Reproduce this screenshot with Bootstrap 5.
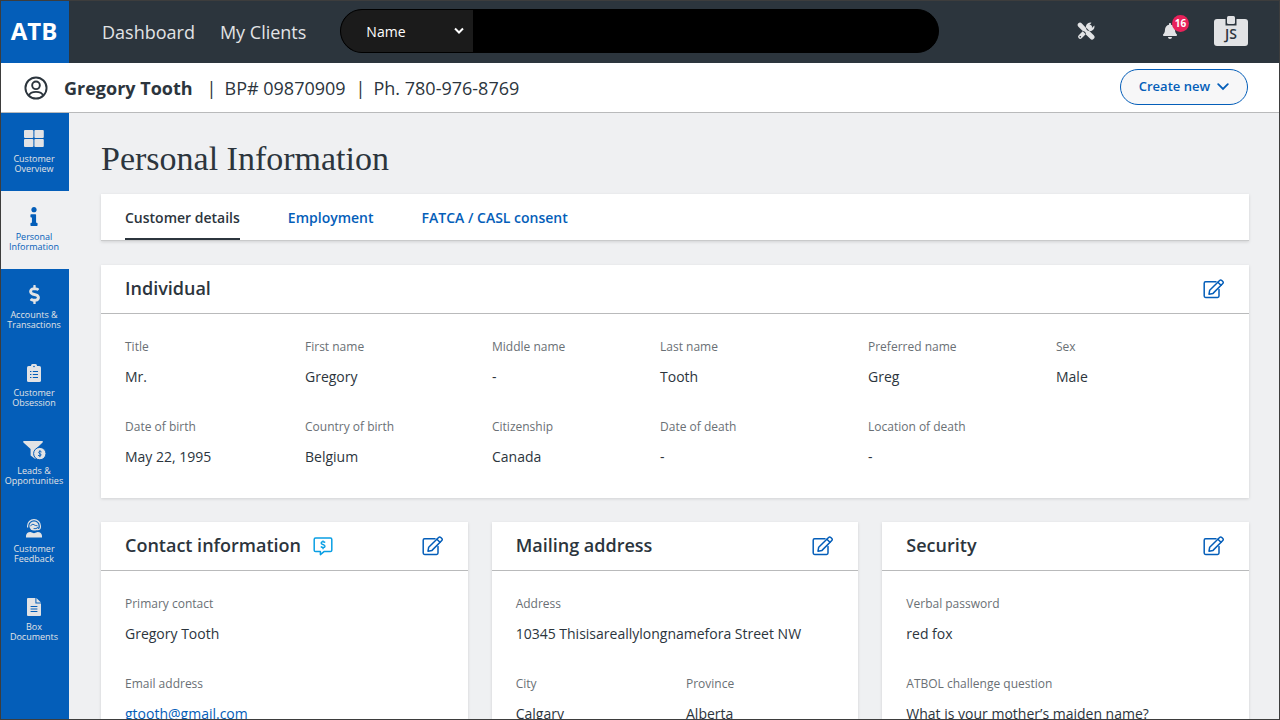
<!DOCTYPE html>
<html lang="en">
<head>
<meta charset="utf-8">
<meta name="viewport" content="width=device-width, initial-scale=1">
<title>Personal Information</title>
<link rel="stylesheet" href="https://cdn.jsdelivr.net/npm/bootstrap@5.3.0/dist/css/bootstrap.min.css">
<style>
  :root { --blue: #045eb9; --ink: #2c353d; --mist: #e2e3e5; --line: #b9babb; }
  body { font-family: "Open Sans", "Liberation Sans", sans-serif; font-size: 14px; line-height: 24px; color: var(--ink); background: #eff0f2; }
  a { color: var(--blue); }
  svg { display: block; flex: none; }
  .app-frame { height: 100vh; border: 1px solid #3d3d3d; overflow: hidden; }

  .topbar { background: var(--ink); min-height: 62px; padding-right: 31px; }
  .brand { background: var(--blue); width: 68px; padding: 0 2px 3px 0; color: #fff; font-weight: 700; font-size: 24px; }
  .brand:hover { color: #fff; }
  .topbar .nav-link { color: var(--mist); font-size: 18px; padding: 0; }
  .main-links { gap: 25px; margin-left: 33px; }
  .search { flex: 0 1 599px; height: 44px; margin: 0 0 2px 34px; border: 1px solid #000; border-radius: 22px; overflow: hidden; background: #000; }
  .search-kind { width: 132px; flex: none; }
  .search-kind .form-select { height: 100%; background: #1b1b1b; color: #fff; border: 0; border-radius: 0; font-size: 14px; padding: 0 24px 0 25px; box-shadow: none; }
  .search-kind svg { position: absolute; right: 8px; top: 50%; margin-top: -4px; pointer-events: none; }
  .search .form-control { background: #000; color: #fff; border: 0; border-radius: 0; box-shadow: none; }
  .tools { padding-bottom: 3px; }
  .icon-btn { background: none; border: 0; padding: 0; color: var(--mist); }
  .btn-bell { margin: 0 37px 0 68px; }
  .count { position: absolute; left: 9px; top: -8px; width: 17px; height: 17px; border-radius: 50%; background: #e8225a; color: #fff; font-size: 10px; font-weight: 700; line-height: 17px; text-align: center; }
  .id-tag { width: 34px; height: 30px; }
  .id-tag .initials { position: absolute; left: 0; right: 0; top: 8px; line-height: 20px; font-size: 14px; font-weight: 600; color: var(--ink); text-align: center; }

  .client-bar { background: #fff; min-height: 50px; border-bottom: 1px solid var(--line); padding: 0 31px 0 23px; font-size: 18px; }
  .client-bar .sep { margin: 0 8px 0 10px; }
  .btn-create { height: 36px; margin-bottom: 2px; border: 1px solid var(--blue); border-radius: 18px; background: #f7f7f8; color: var(--blue); font-size: 13px; font-weight: 600; padding: 0 18px; gap: 7px; }
  .btn-create:hover { background: #e8f0f9; color: var(--blue); border-color: var(--blue); }

  .side { width: 68px; flex: none; background: var(--blue); }
  .side .nav-link { height: 78px; padding: 14px 2px 0 0; color: var(--mist); font-size: 9px; line-height: 10px; gap: 4px; }
  .side .nav-link.active { background: #eff0f2; color: var(--blue); }
  .side .glyph { height: 23px; display: flex; align-items: center; }

  main { padding: 28px 30px 24px 32px; overflow-y: auto; scrollbar-width: none; min-width: 0; }
  main::-webkit-scrollbar { display: none; }
  h1 { font-family: "Liberation Serif", serif; font-size: 34px; line-height: 36px; font-weight: 400; margin: 0 0 17px; }
  .panel { background: #fff; box-shadow: 0 1px 3px rgba(0,0,0,.13); }
  .tabs { height: 47px; padding: 0 24px; gap: 48px; border-bottom: 1px solid #c9cacb; margin-bottom: 24px; }
  .tabs .nav-link { padding: 4px 0 0; font-weight: 600; color: var(--blue); border-bottom: 2px solid transparent; display: flex; align-items: center; }
  .tabs .nav-link.active { color: var(--ink); border-bottom-color: var(--ink); }
  .panel-head { height: 49px; padding: 0 24px; border-bottom: 1px solid var(--line); }
  .panel-head h2 { font-size: 18px; line-height: 24px; font-weight: 600; margin: 0; padding-bottom: 2px; }
  .panel-body { padding: 23px 24px 29px; }
  .cards { display: grid; grid-template-columns: repeat(3, minmax(0, 1fr)); gap: 24px; margin-top: 24px; }
  .facts { display: grid; row-gap: 28px; margin: 0; }
  .facts-six { grid-template-columns: 180fr 187fr 168fr 208fr 188fr 169fr; }
  .facts-two { grid-template-columns: 170fr 148fr; }
  .facts dt { font-weight: 400; font-size: 12px; line-height: 20px; margin-bottom: 8px; color: #6a7075; }
  .facts dd { margin: 0; line-height: 24px; }
  .whole { grid-column: 1 / -1; }
</style>
</head>
<body>
<svg width="0" height="0" class="position-absolute" aria-hidden="true">
  <symbol id="edit" viewBox="0 0 22 20">
    <g fill="none" stroke="currentColor" stroke-width="1.5" stroke-linejoin="round" stroke-linecap="round">
      <path d="M13 2.8H2.6Q1.2 2.8 1.2 4.2V17Q1.2 18.4 2.6 18.4H14.6Q16 18.4 16 17V10.5"/>
      <path d="M6 15.2 6.7 11.2 16.6 1.5Q17.7.5 18.8 1.5L19.8 2.5Q20.8 3.5 19.8 4.5L10 14.4Z"/>
      <path d="M14.9 3.2 18 6.3"/>
    </g>
  </symbol>
</svg>

<div class="app-frame d-flex flex-column">
  <header class="topbar d-flex align-items-stretch">
    <a class="brand d-flex align-items-center justify-content-center text-decoration-none" href="#">ATB</a>
    <nav class="main-links nav align-items-center flex-nowrap text-nowrap" aria-label="Main">
      <a class="nav-link" href="#">Dashboard</a>
      <a class="nav-link" href="#">My Clients</a>
    </nav>
    <form class="search d-flex align-self-center" role="search">
      <div class="search-kind position-relative">
        <select class="form-select" aria-label="Search by"><option>Name</option><option>Phone</option></select>
        <svg width="12" height="8" viewBox="0 0 12 8" fill="none" stroke="#fff" stroke-width="2"><path d="M2 1.5 6 5.5 10 1.5"/></svg>
      </div>
      <input class="form-control" type="search" aria-label="Search clients">
    </form>
    <div class="tools d-flex align-items-center ms-auto">
      <button class="icon-btn" type="button" aria-label="Tools">
        <svg width="18" height="18" viewBox="0 0 18 18">
          <path d="M3.2 14.8 13 5" stroke="currentColor" stroke-width="4.2" stroke-linecap="round"/>
          <path d="M12.6 9.3A4.6 4.6 0 0 1 8.9 4.2 4.5 4.5 0 0 1 14.5.8L12.2 3.2 12.7 5.4 14.9 5.9 17.3 3.5A4.6 4.6 0 0 1 12.6 9.3Z" fill="currentColor"/>
          <path d="M2.8 2.8 15.2 15.2" stroke="#2c353d" stroke-width="5"/>
          <path d="M3 3 6.8 6.8" stroke="currentColor" stroke-width="4.6" stroke-linecap="round"/>
          <path d="M7 7 11 11" stroke="currentColor" stroke-width="3"/>
          <path d="M11.4 11.4 15 15" stroke="currentColor" stroke-width="5" stroke-linecap="round"/>
          <circle cx="3.3" cy="14.8" r=".8" fill="#2c353d"/>
        </svg>
      </button>
      <button class="icon-btn btn-bell position-relative" type="button" aria-label="Notifications">
        <svg width="14" height="16" viewBox="0 0 448 512" fill="currentColor"><path d="M224 512c35.32 0 63.97-28.65 63.97-64H160.03c0 35.35 28.65 64 63.97 64zm215.39-149.71c-19.32-20.76-55.47-51.99-55.47-154.29 0-77.7-54.48-139.9-127.94-155.16V32c0-17.67-14.32-32-31.98-32s-31.98 14.33-31.98 32v20.84C118.56 68.1 64.08 130.3 64.08 208c0 102.3-36.15 133.53-55.47 154.29-6 6.45-8.66 14.16-8.61 21.71.11 16.4 12.98 32 32.1 32h383.8c19.12 0 32-15.6 32.1-32 .05-7.55-2.61-15.27-8.61-21.71z"/></svg>
        <span class="count">16</span>
      </button>
      <button class="icon-btn id-tag position-relative" type="button" aria-label="Profile JS">
        <svg width="34" height="30" viewBox="0 0 34 30">
          <rect y="3" width="34" height="27" rx="3" fill="currentColor"/>
          <path d="M11.5 3V9.5H22.5V3" fill="#2c353d"/>
          <rect x="13" y="0" width="8" height="8" rx="1.5" fill="currentColor"/>
        </svg>
        <span class="initials">JS</span>
      </button>
    </div>
  </header>

  <section class="client-bar d-flex align-items-center justify-content-between" aria-label="Client">
    <div class="d-flex align-items-center text-nowrap">
      <svg class="me-3" width="24" height="24" viewBox="0 0 25 25" fill="none" stroke="#2c353d" stroke-width="2"><circle cx="12.5" cy="12.5" r="11"/><circle cx="12.5" cy="9.7" r="4"/><path d="M5 20.3Q6.5 16.5 12.5 16.5T20 20.3"/></svg>
      <strong class="pe-1">Gregory Tooth</strong><span class="sep">|</span><span>BP# 09870909</span><span class="sep">|</span><span>Ph. 780-976-8769</span>
    </div>
    <button class="btn btn-create d-flex align-items-center" type="button">Create new
      <svg width="12" height="8" viewBox="0 0 12 8" fill="none" stroke="currentColor" stroke-width="1.8" stroke-linecap="round"><path d="M1.2 1.2 6 6 10.8 1.2"/></svg>
    </button>
  </section>

  <div class="d-flex flex-grow-1" style="min-height:0">
    <nav class="side nav flex-column flex-nowrap text-center" aria-label="Client sections">
      <a class="nav-link d-flex flex-column align-items-center" href="#">
        <span class="glyph"><svg width="20" height="17" viewBox="0 0 20 17" fill="currentColor"><rect width="9.4" height="8" rx="1"/><rect x="10.4" width="9.4" height="8" rx="1"/><rect y="9" width="9.4" height="8" rx="1"/><rect x="10.4" y="9" width="9.4" height="8" rx="1"/></svg></span>
        <span>Customer<br>Overview</span></a>
      <a class="nav-link active d-flex flex-column align-items-center" href="#" aria-current="page">
        <span class="glyph"><svg width="8" height="19" viewBox="0 0 192 512" fill="currentColor"><path d="M20 424.229h20V279.771H20c-11.046 0-20-8.954-20-20V212c0-11.046 8.954-20 20-20h112c11.046 0 20 8.954 20 20v212.229h20c11.046 0 20 8.954 20 20V492c0 11.046-8.954 20-20 20H20c-11.046 0-20-8.954-20-20v-47.771c0-11.046 8.954-20 20-20zM96 0C56.235 0 24 32.235 24 72s32.235 72 72 72 72-32.235 72-72S135.764 0 96 0z"/></svg></span>
        <span>Personal<br>Information</span></a>
      <a class="nav-link d-flex flex-column align-items-center" href="#">
        <span class="glyph"><svg width="11" height="19" viewBox="0 0 288 512" fill="currentColor"><path d="M209.2 233.4l-108-31.6C88.7 198.2 80 186.5 80 173.5c0-16.3 13.2-29.5 29.5-29.5h66.3c12.2 0 24.2 3.7 34.2 10.5 6.1 4.1 14.3 3.1 19.5-2l34.8-34c7.1-6.9 6.1-18.4-1.8-24.5C238 74.8 207.4 64.1 176 64V16c0-8.8-7.2-16-16-16h-32c-8.8 0-16 7.2-16 16v48h-2.5C45.8 64-5.4 118.7.5 183.6c4.2 46.1 39.4 83.6 83.8 96.6l102.5 30c12.5 3.7 21.2 15.3 21.2 28.3 0 16.3-13.2 29.5-29.5 29.5h-66.3C100 368 88 364.3 78 357.5c-6.1-4.1-14.3-3.1-19.5 2l-34.8 34c-7.1 6.9-6.1 18.4 1.8 24.5 24.5 19.2 55.1 29.9 86.5 30v48c0 8.8 7.2 16 16 16h32c8.8 0 16-7.2 16-16v-48.2c46.6-.9 90.3-28.6 105.7-72.7 21.5-61.6-14.6-124.8-72.5-141.7z"/></svg></span>
        <span>Accounts &amp;<br>Transactions</span></a>
      <a class="nav-link d-flex flex-column align-items-center" href="#">
        <span class="glyph"><svg width="14" height="18" viewBox="0 0 14 18"><rect y="2" width="14" height="16" rx="1.6" fill="currentColor"/><rect x="4" y="0" width="6" height="5" rx="1.5" fill="currentColor"/><circle cx="7" cy="2.5" r=".8" fill="#045eb9"/><path d="M3 7.5H4.4M5.8 7.5H11M3 10.5H4.4M5.8 10.5H11M3 13.5H4.4M5.8 13.5H11" stroke="#045eb9"/></svg></span>
        <span>Customer<br>Obsession</span></a>
      <a class="nav-link d-flex flex-column align-items-center" href="#">
        <span class="glyph"><svg width="23" height="19" viewBox="0 0 23 19"><path d="M.8 0H19.2Q20.4.4 19.6 1.4L12.8 8V17.2Q12.4 18 11.6 17.6L7.6 14.6V8L.4 1.4Q-.2.4.8 0Z" fill="currentColor"/><circle cx="16.8" cy="12.6" r="6.2" fill="currentColor" stroke="#045eb9"/><path d="M18.6 11Q17.6 10 16.3 10.4 15 11.3 16.2 12.3L17.6 13Q18.8 14 17.4 14.9 16 15.2 15 14.2M16.9 9.2V16.2" fill="none" stroke="#045eb9" stroke-width=".9"/></svg></span>
        <span>Leads &amp;<br>Opportunities</span></a>
      <a class="nav-link d-flex flex-column align-items-center" href="#">
        <span class="glyph"><svg width="16" height="19" viewBox="0 0 16 19"><circle cx="8" cy="7" r="4.6" fill="currentColor"/><path d="M1.6 8.5V7A6.4 6.4 0 0 1 14.4 7V8.2Q14.2 10.6 11.8 10.6H8.6" fill="none" stroke="currentColor" stroke-width="1.2"/><path d="M4.5 7.2Q5.4 5.2 7 5.2 9.2 6.8 11.5 6.8M7.6 9.6H10Q11.4 9.4 11.6 8" fill="none" stroke="#045eb9" stroke-width=".9"/><path d="M0 18.6V16.8Q.4 13.2 4.4 13L8 14.3 11.6 13Q15.6 13.2 16 16.8V18.6Z" fill="currentColor"/></svg></span>
        <span>Customer<br>Feedback</span></a>
      <a class="nav-link d-flex flex-column align-items-center" href="#">
        <span class="glyph"><svg width="14" height="18" viewBox="0 0 14 18"><path d="M1 0H8.4V5.4H14V17Q14 18 13 18H1Q0 18 0 17V1Q0 0 1 0ZM9.4 0 14 4.5H9.4Z" fill="currentColor"/><path d="M3.6 8.5H10.4M3.6 11H10.4M3.6 13.5H10.4" stroke="#045eb9"/></svg></span>
        <span>Box<br>Documents</span></a>
    </nav>

    <main class="flex-grow-1">
      <h1>Personal Information</h1>

      <nav class="tabs panel nav flex-nowrap align-items-stretch text-nowrap" aria-label="Personal information">
        <a class="nav-link active" href="#" aria-current="page">Customer details</a>
        <a class="nav-link" href="#">Employment</a>
        <a class="nav-link" href="#">FATCA / CASL consent</a>
      </nav>

      <section class="panel">
        <div class="panel-head d-flex align-items-center justify-content-between">
          <h2>Individual</h2>
          <button class="icon-btn" type="button" aria-label="Edit individual"><svg width="22" height="20" color="#045eb9"><use href="#edit"/></svg></button>
        </div>
        <dl class="panel-body facts facts-six">
          <div><dt>Title</dt><dd>Mr.</dd></div>
          <div><dt>First name</dt><dd>Gregory</dd></div>
          <div><dt>Middle name</dt><dd>-</dd></div>
          <div><dt>Last name</dt><dd>Tooth</dd></div>
          <div><dt>Preferred name</dt><dd>Greg</dd></div>
          <div><dt>Sex</dt><dd>Male</dd></div>
          <div><dt>Date of birth</dt><dd>May 22, 1995</dd></div>
          <div><dt>Country of birth</dt><dd>Belgium</dd></div>
          <div><dt>Citizenship</dt><dd>Canada</dd></div>
          <div><dt>Date of death</dt><dd>-</dd></div>
          <div><dt>Location of death</dt><dd>-</dd></div>
        </dl>
      </section>

      <div class="cards">
        <section class="panel">
          <div class="panel-head d-flex align-items-center justify-content-between">
            <div class="d-flex align-items-center gap-2">
              <h2>Contact information</h2>
              <svg class="ms-1" width="20" height="19" viewBox="0 0 20 19" fill="none" stroke="#0a9fe4" stroke-width="1.5" stroke-linejoin="round"><path d="M2.6 1H17.4Q18.8 1 18.8 2.4V13.2Q18.8 14.6 17.4 14.6H11L7.4 17.6V14.6H2.6Q1.2 14.6 1.2 13.2V2.4Q1.2 1 2.6 1Z"/><path d="M12.2 5.6Q10.8 4.3 9 4.9 7.4 6 9 7.2L11 8Q12.8 9.2 11.2 10.4 9.2 11 7.8 9.6M10 3.4V5M10 10.6V12.2" stroke-width="1.4"/></svg>
            </div>
            <button class="icon-btn" type="button" aria-label="Edit contact information"><svg width="22" height="20" color="#045eb9"><use href="#edit"/></svg></button>
          </div>
          <dl class="panel-body facts">
            <div><dt>Primary contact</dt><dd>Gregory Tooth</dd></div>
            <div><dt>Email address</dt><dd><a href="#">gtooth@gmail.com</a></dd></div>
          </dl>
        </section>
        <section class="panel">
          <div class="panel-head d-flex align-items-center justify-content-between">
            <h2>Mailing address</h2>
            <button class="icon-btn" type="button" aria-label="Edit mailing address"><svg width="22" height="20" color="#045eb9"><use href="#edit"/></svg></button>
          </div>
          <dl class="panel-body facts facts-two">
            <div class="whole"><dt>Address</dt><dd>10345 Thisisareallylongnamefora Street NW</dd></div>
            <div><dt>City</dt><dd>Calgary</dd></div>
            <div><dt>Province</dt><dd>Alberta</dd></div>
          </dl>
        </section>
        <section class="panel">
          <div class="panel-head d-flex align-items-center justify-content-between">
            <h2>Security</h2>
            <button class="icon-btn" type="button" aria-label="Edit security"><svg width="22" height="20" color="#045eb9"><use href="#edit"/></svg></button>
          </div>
          <dl class="panel-body facts">
            <div><dt>Verbal password</dt><dd>red fox</dd></div>
            <div><dt>ATBOL challenge question</dt><dd>What is your mother’s maiden name?</dd></div>
          </dl>
        </section>
      </div>
    </main>
  </div>
</div>
<script src="https://cdn.jsdelivr.net/npm/bootstrap@5.3.0/dist/js/bootstrap.bundle.min.js"></script>
</body>
</html>
